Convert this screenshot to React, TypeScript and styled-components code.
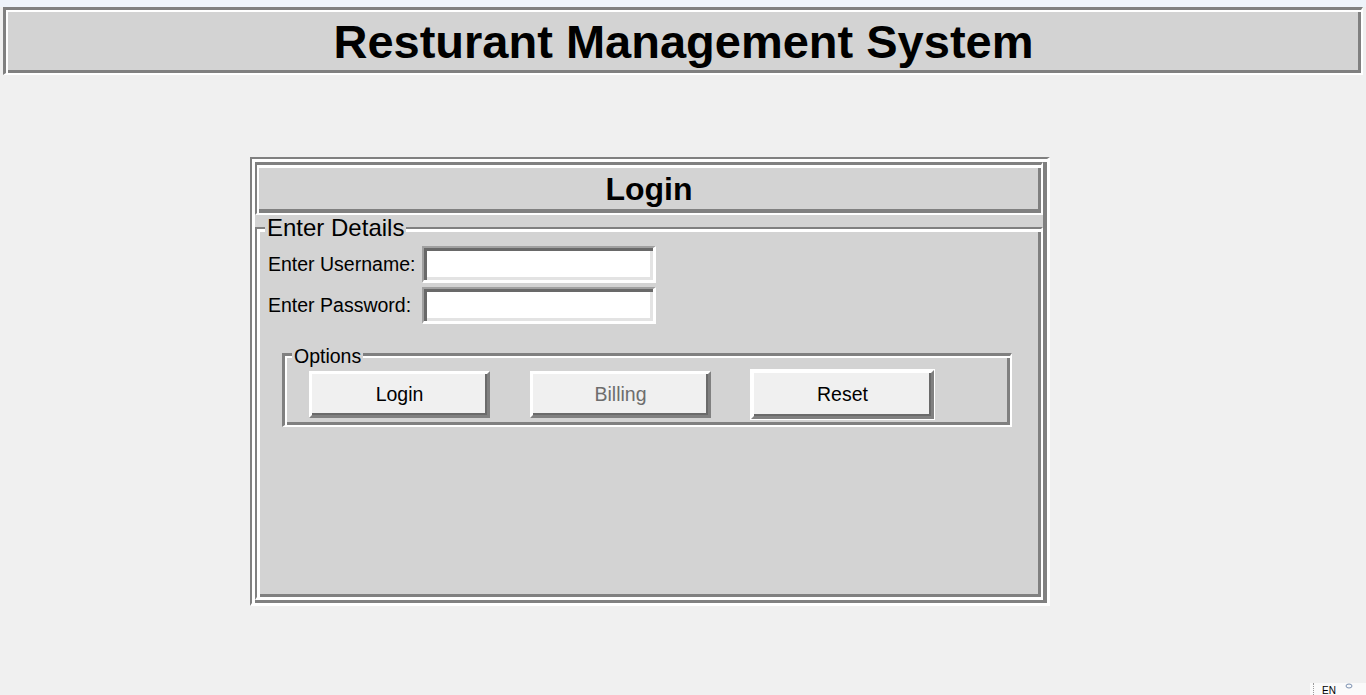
import React from "react"
import styled, { createGlobalStyle } from "styled-components"

const GRAY = "#808080"
const LIGHT = "#ffffff"
const PANEL_BG = "#d3d3d3"
const PAGE_BG = "#f0f0f0"
const BODY_FONT = 19.5

const GlobalStyle = createGlobalStyle`
    html, body {
        margin: 0;
        padding: 0;
        background: ${PAGE_BG};
        overflow: hidden;
    }
    body {
        font-family: "Liberation Sans", Arial, sans-serif;
        color: #000;
    }
    * {
        box-sizing: border-box;
    }
`

const Page = styled.div`
    position: relative;
    width: 1366px;
    height: 695px;
    display: flex;
    flex-direction: column;
`

const WindowStrip = styled.div`
    height: 7px;
    background: #eef3fa;
`

// groove relief as drawn by Tk: dark outside top-left, light outside bottom-right
const Banner = styled.header`
    margin: 0 3px;
    height: 68px;
    background: ${PANEL_BG};
    border-style: solid;
    border-width: 3px 2px 2px 3px;
    border-color: ${GRAY} ${LIGHT} ${LIGHT} ${GRAY};
    box-shadow: inset 2px 2px 0 ${LIGHT}, inset -3px -3px 0 ${GRAY};
    display: flex;
    align-items: center;
    justify-content: center;
`

const Title = styled.h1`
    margin: 0;
    font-size: 47px;
    font-weight: bold;
    line-height: 1;
`

const LoginPanel = styled.section`
    margin: 82px 0 0 250px;
    width: 800px;
    height: 449px;
    background: ${PANEL_BG};
    border-style: solid;
    border-width: 2px 3px 3px 2px;
    border-color: ${GRAY} ${LIGHT} ${LIGHT} ${GRAY};
    box-shadow: inset 3px 3px 0 ${LIGHT}, inset -4px -3px 0 ${GRAY};
    padding: 3px 4px 3px 3px;
    display: flex;
    flex-direction: column;
`

const PanelHeader = styled.div`
    height: 53px;
    flex-shrink: 0;
    border-style: solid;
    border-width: 3px 2px 2px 2px;
    border-color: ${GRAY} ${LIGHT} ${LIGHT} ${GRAY};
    box-shadow: inset 2px 3px 0 ${LIGHT}, inset -3px -4px 0 ${GRAY};
    display: flex;
    align-items: center;
    justify-content: center;
    font-size: 32px;
    font-weight: bold;
`

const LabelFrame = styled.div<{ grow?: boolean }>`
    display: flex;
    flex-direction: column;
    ${(props) => props.grow && "flex: 1;"}
`

const Legend = styled.span<{ size: number; offset: number }>`
    position: relative;
    z-index: 1;
    align-self: flex-start;
    margin-left: ${(props) => props.offset}px;
    padding: 0 2px;
    background: ${PANEL_BG};
    font-size: ${(props) => props.size}px;
    line-height: ${(props) => Math.round(props.size * 1.08)}px;
`

const DetailsBox = styled.div`
    flex: 1;
    margin-top: -14px;
    border-style: solid;
    border-width: 2px 2px 3px 2px;
    border-color: ${GRAY} ${LIGHT} ${LIGHT} ${GRAY};
    box-shadow: inset 3px 3px 0 ${LIGHT}, inset -3px -3px 0 ${GRAY};
    padding: 17px 0 0 11px;
`

const FieldGrid = styled.div`
    display: grid;
    grid-template-columns: 150px 234px;
    column-gap: 4px;
    row-gap: 4px;
    align-items: center;
`

const FieldLabel = styled.label`
    font-size: ${BODY_FONT}px;
`

const Entry = styled.input`
    width: 234px;
    height: 37px;
    margin: 0;
    padding: 0 6px;
    background: #fff;
    font-family: inherit;
    font-size: ${BODY_FONT}px;
    outline: none;
    border-style: solid;
    border-width: 2px 3px 3px 2px;
    border-color: #a0a0a0 ${LIGHT} ${LIGHT} #a0a0a0;
    box-shadow: inset 3px 3px 0 #696969, inset -3px -3px 0 #e3e3e3;
`

const OptionsFrame = styled(LabelFrame)`
    margin: 22px 0 0 14px;
    width: 730px;
`

const OptionsBox = styled.div`
    margin-top: -14px;
    border-style: solid;
    border-width: 3px 2px 2px 3px;
    border-color: ${GRAY} ${LIGHT} ${LIGHT} ${GRAY};
    box-shadow: inset 2px 2px 0 ${LIGHT}, inset -3px -3px 0 ${GRAY};
    padding: 15px 0 7px 24px;
    display: flex;
    align-items: center;
    gap: 40px;
`

const ActionButton = styled.button<{ focused?: boolean }>`
    width: ${(props) => (props.focused ? 183 : 181)}px;
    height: ${(props) => (props.focused ? 49 : 47)}px;
    margin: ${(props) => (props.focused ? "-1px 0" : "0")};
    background: #f0f0f0;
    font-family: inherit;
    font-size: ${BODY_FONT}px;
    color: #000;
    padding: 0;
    border-style: solid;
    border-width: 3px;
    border-color: ${LIGHT} ${GRAY} ${GRAY} ${LIGHT};
    box-shadow: inset -2px -2px 0 #6a6a6a;
    ${(props) => props.focused && `outline: 1px solid ${LIGHT};`}

    &:disabled {
        color: #6d6d6d;
    }
`

const TrayCorner = styled.div`
    position: absolute;
    right: 0;
    bottom: 0;
    width: 56px;
    height: 12px;
    background: #fafafa;
    display: flex;
    align-items: flex-start;
    padding-left: 3px;
    gap: 8px;
    font-size: 10px;
    overflow: hidden;
`

const TrayDots = styled.span`
    width: 1px;
    height: 12px;
    border-left: 1px dotted #9a9a9a;
`

const TrayText = styled.span`
    margin-top: 3px;
    line-height: 10px;
`

const App: React.FC = () => {
    return (
        <Page>
            <GlobalStyle />
            <WindowStrip />
            <Banner>
                <Title>Resturant Management System</Title>
            </Banner>
            <LoginPanel>
                <PanelHeader>Login</PanelHeader>
                <LabelFrame grow>
                    <Legend size={24} offset={10}>
                        Enter Details
                    </Legend>
                    <DetailsBox>
                        <FieldGrid>
                            <FieldLabel htmlFor="username">Enter Username:</FieldLabel>
                            <Entry id="username" type="text" />
                            <FieldLabel htmlFor="password">Enter Password:</FieldLabel>
                            <Entry id="password" type="password" />
                        </FieldGrid>
                        <OptionsFrame>
                            <Legend size={BODY_FONT} offset={10}>
                                Options
                            </Legend>
                            <OptionsBox>
                                <ActionButton>Login</ActionButton>
                                <ActionButton disabled>Billing</ActionButton>
                                <ActionButton focused>Reset</ActionButton>
                            </OptionsBox>
                        </OptionsFrame>
                    </DetailsBox>
                </LabelFrame>
            </LoginPanel>
            <TrayCorner>
                <TrayDots />
                <TrayText>EN</TrayText>
                <svg width="10" height="8" viewBox="0 0 10 8">
                    <ellipse cx="5" cy="3" rx="3" ry="2" fill="none" stroke="#7a90b0" strokeWidth="1" />
                </svg>
            </TrayCorner>
        </Page>
    )
}

export default App
